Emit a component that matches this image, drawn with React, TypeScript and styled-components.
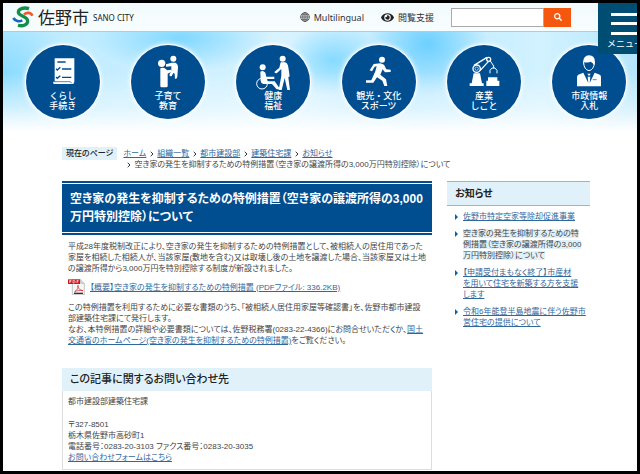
import React from "react";
import styled, { createGlobalStyle } from "styled-components";
import { FaEye, FaSearch } from "react-icons/fa";

const navy = "#004e90";
const pale = "#e1f1f9";
const linkBlue = "#2f689c";

const GlobalStyle = createGlobalStyle`
  * { box-sizing: border-box; }
  body {
    margin: 0;
    background: #000;
    color: #444;
    font-family: "Liberation Sans", "Noto Sans CJK JP", sans-serif;
    font-size: 8px;
    line-height: 11px;
    font-feature-settings: "palt";
  }
  h1, h2, p, ul, ol { margin: 0; padding: 0; font-weight: inherit; }
  ul, ol { list-style: none; }
  a { color: ${linkBlue}; }
`;

const Page = styled.div`
  position: relative;
  min-height: 100vh;
  border: 3px solid #000;
  background: #fff;
  overflow: hidden;
`;

const Header = styled.header`
  display: flex;
  align-items: center;
  height: 29px;
  padding-left: 9px;
  padding-right: 66px;
  background: linear-gradient(#f2fafd, #f8fdff);
  border-bottom: 1px solid #a5cfe2;
`;

const Brand = styled.a`
  display: flex;
  align-items: center;
  gap: 4px;
  color: #222;
  text-decoration: none;
  font-family: "Noto Sans CJK JP", sans-serif;
`;

const CityName = styled.span`
  font-size: 17px;
  line-height: 24px;
  font-weight: 400;
`;

const CityRoman = styled.span`
  font-family: "Noto Sans", sans-serif;
  font-size: 8px;
`;

const Tools = styled.div`
  display: flex;
  align-items: center;
  gap: 17px;
  margin-left: auto;
`;

const ToolLink = styled.a`
  display: flex;
  align-items: center;
  gap: 4px;
  color: #333;
  font-family: "Noto Sans", "Noto Sans CJK JP", sans-serif;
  font-size: 9px;
  text-decoration: none;
  white-space: nowrap;
`;

const SearchForm = styled.form`
  display: flex;
  height: 19px;
`;

const SearchInput = styled.input`
  width: 93px;
  border: 1px solid #aaa;
  border-radius: 0;
  background: #fff;
  padding: 0 4px;
  font-size: 9px;
`;

const SearchButton = styled.button`
  display: flex;
  align-items: center;
  justify-content: center;
  width: 27px;
  border: 0;
  padding: 0;
  background: #f6570f;
  color: #fff;
  font-size: 8px;
`;

const MenuButton = styled.button`
  position: absolute;
  top: 0;
  right: -15px;
  width: 54px;
  height: 51px;
  border: 0;
  padding: 5px 0 0;
  background: #004d74;
  color: #fff;
  font-family: "Noto Sans CJK JP", sans-serif;
  font-size: 9px;
  line-height: 13px;
  text-align: center;
  z-index: 1;
`;

const MenuBars = styled.span`
  display: block;
  height: 22px;
  margin: 0 13px 2px;
  border-top: 3px solid #fff;
  border-bottom: 3px solid #fff;
  background: linear-gradient(#fff, #fff) center / 100% 3px no-repeat;
`;

const Hero = styled.nav`
  padding: 13px 0 14px;
  background:
    linear-gradient(to bottom, rgba(255, 255, 255, 0) 40%, rgba(255, 255, 255, 0.45) 75%, #fff 99%),
    radial-gradient(ellipse 50px 36px at 52% 28%, rgba(115, 213, 255, 0.8), transparent),
    radial-gradient(ellipse 60px 50px at 67% 12%, rgba(100, 205, 255, 0.9), transparent),
    radial-gradient(ellipse 90px 34px at 28% 6%, rgba(110, 210, 255, 0.8), transparent),
    radial-gradient(ellipse 70px 60px at 0% 40%, rgba(125, 215, 255, 0.8), transparent),
    linear-gradient(to right, #b9eaff, #d8f3ff 45%, #bdeaff 65%, #d2f2ff 85%, #b5e6fc);
`;

const CategoryList = styled.ul`
  display: grid;
  grid-template-columns: repeat(6, 1fr);
  justify-items: center;
  margin: 0 -5px 0 7px;
`;

const Category = styled.a`
  display: flex;
  flex-direction: column;
  align-items: center;
  width: 74px;
  height: 74px;
  padding-top: 9px;
  border-radius: 50%;
  background: ${navy};
  box-shadow: 0 0 0 1px #fff, 0 0 5px 1px #fff;
  color: #fff;
  font-family: "Noto Sans CJK JP", sans-serif;
  font-feature-settings: normal;
  font-size: 9px;
  font-weight: 500;
  line-height: 10px;
  text-align: center;
  text-decoration: none;
  white-space: nowrap;

  svg { display: block; }
`;

const CategoryLabel = styled.span`
  margin-top: 1px;
`;

const Content = styled.div`
  margin: 14px 47px 0 59px;
`;

const Breadcrumb = styled.nav`
  display: flex;
  align-items: flex-start;
  gap: 6px;
`;

const BreadcrumbTitle = styled.span`
  padding: 1px 4px;
  background: ${pale};
  color: #222;
  font-weight: 500;
  white-space: nowrap;
`;

const Trail = styled.ol`
  display: flex;
  flex-wrap: wrap;
  padding-top: 1px;
`;

const TrailItem = styled.li<{ $current?: boolean }>`
  display: flex;
  align-items: center;
  white-space: nowrap;
  flex-basis: ${(p) => (p.$current ? "100%" : "auto")};

  svg { margin: 0 3px 0 4px; }
  &:first-child svg { display: none; }
`;

const Columns = styled.div`
  display: grid;
  grid-template-columns: minmax(0, 1fr) 143px;
  gap: 15px;
  align-items: start;
  margin-top: 11px;
`;

const TitleFrame = styled.div`
  border: solid ${navy};
  border-width: 2px 0;
  padding: 1px 0;
`;

const Title = styled.h1`
  padding: 6px 8px;
  background: ${navy};
  color: #fff;
  font-size: 12px;
  font-weight: 700;
  line-height: 18px;
  white-space: nowrap;
`;

const Story = styled.div`
  display: grid;
  gap: 5px;
  padding: 6px 0 0 6px;
  white-space: nowrap;
`;

const FileLine = styled.p`
  display: flex;
  align-items: center;
  gap: 5px;
  padding-bottom: 2px;
`;

const Contact = styled.section`
  margin-top: 22px;
`;

const ContactTitle = styled.h2`
  padding: 0 8px;
  background: ${pale};
  color: #222;
  font-size: 11px;
  font-weight: 500;
  line-height: 23px;
`;

const ContactBody = styled.address`
  padding: 5px 5px 6px;
  border: 1px solid #ddd;
  border-top: 0;
  font-style: normal;
`;

const Lines = styled.p`
  margin-bottom: 12px;
`;

const NewsTitle = styled.h2`
  padding: 0 8px;
  border: solid #83bbeb;
  border-width: 1px 0;
  background: ${pale};
  color: #222;
  font-size: 10px;
  font-weight: 700;
  line-height: 23px;
`;

const NewsList = styled.ul`
  display: grid;
  gap: 6px;
  padding: 5px 0 0 8px;
`;

const NewsItem = styled.li`
  display: grid;
  grid-template-columns: 3px 1fr;
  gap: 5px;
  white-space: nowrap;

  svg { margin-top: 3px; }
`;

const Current = styled.span`
  background: ${pale};
`;

const CityLogo = () => (
  <svg width="22" height="23" viewBox="0 0 66 69" fill="none" aria-hidden="true">
    <path d="M4 36c6 10 17 12 27 7" stroke="#1268b3" strokeWidth="8" />
    <path d="M36 25c9-7 21-6 25 4" stroke="#f1592a" strokeWidth="8" />
    <path d="M51 8C34 3 19 9 19 19c0 12 28 10 28 26 0 11-13 17-29 13" stroke="#12904a" strokeWidth="10" />
  </svg>
);

const Globe = () => (
  <svg width="10" height="10" viewBox="0 0 20 20" fill="none" stroke="#444" strokeWidth="1.5" aria-hidden="true">
    <circle cx="10" cy="10" r="8.8" />
    <ellipse cx="10" cy="10" rx="4.4" ry="8.8" />
    <path d="M10 1v18M1 10h18M2.5 5.5h15M2.5 14.5h15" />
  </svg>
);

const Chevron = () => (
  <svg width="4" height="6" viewBox="0 0 4 6" fill="none" stroke="#333" aria-hidden="true">
    <path d="M.7.8 3 3 .7 5.2" />
  </svg>
);

const Bullet = () => (
  <svg width="3" height="6" viewBox="0 0 3 6" aria-hidden="true">
    <path d="M0 0 3 3 0 6z" fill="#0563b0" />
  </svg>
);

const PdfIcon = () => (
  <svg width="17" height="16" viewBox="0 0 51 48" aria-hidden="true">
    <path d="M13 2h25l11 11v34H13z" fill="#f7f7f7" stroke="#aaa" strokeWidth="2" />
    <path d="M38 2v11h11" fill="#ddd" stroke="#aaa" strokeWidth="2" />
    <path d="M0 1h36v14H0z" fill="#d3151c" />
    <path d="M5 12V4h4v4H5M15 4v8h4l2-2V6l-2-2zM27 12V4h5M27 8h4" stroke="#fff" strokeWidth="2" fill="none" />
    <path d="M20 38c8-5 12-12 10-19-2 8 5 14 15 16-8-2-18 0-25 3z" stroke="#d3151c" strokeWidth="2" fill="none" />
    <path d="M18 43h27" stroke="#333" strokeWidth="4" />
  </svg>
);

const Glyph = ({ children }: { children: React.ReactNode }) => (
  <svg width="40" height="36" viewBox="0 0 120 108" fill="#fff" stroke="none" aria-hidden="true">
    {children}
  </svg>
);

const Checklist = () => (
  <Glyph>
    <path d="M35 13h59v70q0 7-6 7H35q-6 0-5-7h5z" />
    <g fill="none" stroke={navy} strokeWidth="4">
      <path d="M43 24h25M57 45h28M57 70h28" />
      <path d="m39 44 4 4 9-8M39 69l4 4 9-8" />
      <path d="M31 83h51l4 5" strokeWidth="2" />
    </g>
  </Glyph>
);

const ParentChild = () => (
  <Glyph>
    <circle cx="41" cy="28" r="11" />
    <circle cx="76" cy="14" r="9" />
    <path d="M37 43q4-3 12-1l9 7 11-2 1 6-11 6v38q0 3-5 3H40q-3 0-3-5z" />
    <path d="M54 31l17-5h11q8 3 8 14l-2 28q-1 8-7 6l-1-15-4-2-5 9q-5 3-7-3l6-14V37l-16 1z" />
  </Glyph>
);

const Care = () => (
  <Glyph>
    <circle cx="29" cy="40" r="9" />
    <circle cx="89" cy="14" r="9" />
    <circle cx="27" cy="89" r="16" fill="none" stroke="#fff" strokeWidth="3" />
    <path d="M22 53q8-5 15 3l3 12h24v7H42l2 7h21l12 17 7 1v6H71L57 90H31q-7-1-8-9z" />
    <path d="M83 25h13q8 2 10 15l4 27-4 3 5 38h-8L95 72l-9 36h-9l8-43V45L71 58q-6 0-7-4l15-13z" />
  </Glyph>
);

const Runner = () => (
  <Glyph>
    <circle cx="69" cy="17" r="9" />
    <path d="M44 30l20-2 11 4 7 14 13 1v7l-17 1-7-9-7 16 17 14 4 20h-9l-6-16-16-10-11 16H21v-7h16l12-27 4-15-6 1-8 14-7-3z" />
  </Glyph>
);

const RobotArm = () => (
  <Glyph>
    <g fill="none" stroke="#fff" strokeWidth="4">
      <path d="M30 34 69 10M48 50l25-27" />
      <circle cx="38" cy="44" r="11" />
      <circle cx="38" cy="44" r="5" strokeWidth="2" />
      <circle cx="74" cy="16" r="6" />
      <path d="m79 21 10 15M89 35v8M78 58V49l6-7h9l6 7v9" strokeWidth="3" />
    </g>
    <path d="M29 58h19l6 30h5v8H17v-8h6zM72 70h28v10h6v16H67V80h5z" />
  </Glyph>
);

const Official = () => (
  <Glyph>
    <path d="M42 25q1-20 18-21 18 0 18 21l-2 9q-4-8-11-11-12 4-20 2l-2 8z" />
    <path d="M44 26q1 21 16 24 15-3 16-24" fill="none" stroke="#fff" strokeWidth="3" />
    <path d="M24 97V68q1-6 9-8l10-4 15 31-2-19h8l-2 19 15-31 10 4q9 2 9 8v29z" />
    <path d="M55 59h10l-5 7z" />
    <path d="M71 77h12" stroke={navy} strokeWidth="2" />
  </Glyph>
);

const categories = [
  { icon: <Checklist />, lines: ["くらし", "手続き"] },
  { icon: <ParentChild />, lines: ["子育て", "教育"] },
  { icon: <Care />, lines: ["健康", "福祉"] },
  { icon: <Runner />, lines: ["観光・文化", "スポーツ"] },
  { icon: <RobotArm />, lines: ["産業", "しごと"] },
  { icon: <Official />, lines: ["市政情報", "入札"] },
];

const trail = ["ホーム", "組織一覧", "都市建設部", "建築住宅課", "お知らせ"];

export default function App() {
  return (
    <Page>
      <GlobalStyle />
      <Header>
        <Brand href="#">
          <CityLogo />
          <CityName>佐野市</CityName>
          <CityRoman>SANO CITY</CityRoman>
        </Brand>
        <Tools>
          <ToolLink href="#"><Globe />Multilingual</ToolLink>
          <ToolLink href="#"><FaEye size={13} color="#222" />閲覧支援</ToolLink>
          <SearchForm>
            <SearchInput type="search" aria-label="サイト内検索" />
            <SearchButton type="button" aria-label="検索"><FaSearch /></SearchButton>
          </SearchForm>
        </Tools>
      </Header>
      <MenuButton type="button"><MenuBars />メニュー</MenuButton>

      <Hero>
        <CategoryList>
          {categories.map(({ icon, lines }) => (
            <li key={lines[0]}>
              <Category href="#">
                {icon}
                <CategoryLabel>{lines[0]}<br />{lines[1]}</CategoryLabel>
              </Category>
            </li>
          ))}
        </CategoryList>
      </Hero>

      <Content>
        <Breadcrumb>
          <BreadcrumbTitle>現在のページ</BreadcrumbTitle>
          <Trail>
            {trail.map((name) => (
              <TrailItem key={name}><Chevron /><a href="#">{name}</a></TrailItem>
            ))}
            <TrailItem $current>
              <Chevron />空き家の発生を抑制するための特例措置（空き家の譲渡所得の3,000万円特別控除）について
            </TrailItem>
          </Trail>
        </Breadcrumb>

        <Columns>
          <main>
            <TitleFrame>
              <Title>
                空き家の発生を抑制するための特例措置（空き家の譲渡所得の3,000<br />
                万円特別控除）について
              </Title>
            </TitleFrame>
            <Story>
              <p>
                平成28年度税制改正により、空き家の発生を抑制するための特例措置として、被相続人の居住用であった<br />
                家屋を相続した相続人が、当該家屋(敷地を含む)又は取壊し後の土地を譲渡した場合、当該家屋又は土地<br />
                の譲渡所得から3,000万円を特別控除する制度が新設されました。
              </p>
              <FileLine>
                <PdfIcon />
                <a href="#">【概要】空き家の発生を抑制するための特例措置 (PDFファイル: 336.2KB)</a>
              </FileLine>
              <p>
                この特例措置を利用するために必要な書類のうち、「被相続人居住用家屋等確認書」を、佐野市都市建設<br />
                部建築住宅課にて発行します。<br />
                なお、本特例措置の詳細や必要書類については、佐野税務署(0283-22-4366)にお問合せいただくか、<a href="#">国土<br />
                交通省のホームページ(空き家の発生を抑制するための特例措置)</a>をご覧ください。
              </p>
            </Story>

            <Contact>
              <ContactTitle>この記事に関するお問い合わせ先</ContactTitle>
              <ContactBody>
                <Lines>都市建設部建築住宅課</Lines>
                <p>
                  〒327-8501<br />
                  栃木県佐野市高砂町1<br />
                  電話番号：0283-20-3103 ファクス番号：0283-20-3035<br />
                  <a href="#">お問い合わせフォームはこちら</a>
                </p>
              </ContactBody>
            </Contact>
          </main>

          <aside>
            <NewsTitle>お知らせ</NewsTitle>
            <NewsList>
              <NewsItem><Bullet /><a href="#">佐野市特定空家等除却促進事業</a></NewsItem>
              <NewsItem>
                <Bullet />
                <div><Current>空き家の発生を抑制するための特<br />例措置（空き家の譲渡所得の3,000<br />万円特別控除）について</Current></div>
              </NewsItem>
              <NewsItem>
                <Bullet />
                <a href="#">【申請受付まもなく終了】市産材<br />を用いて住宅を新築する方を支援<br />します</a>
              </NewsItem>
              <NewsItem>
                <Bullet />
                <a href="#">令和6年能登半島地震に伴う佐野市<br />営住宅の提供について</a>
              </NewsItem>
            </NewsList>
          </aside>
        </Columns>
      </Content>
    </Page>
  );
}
